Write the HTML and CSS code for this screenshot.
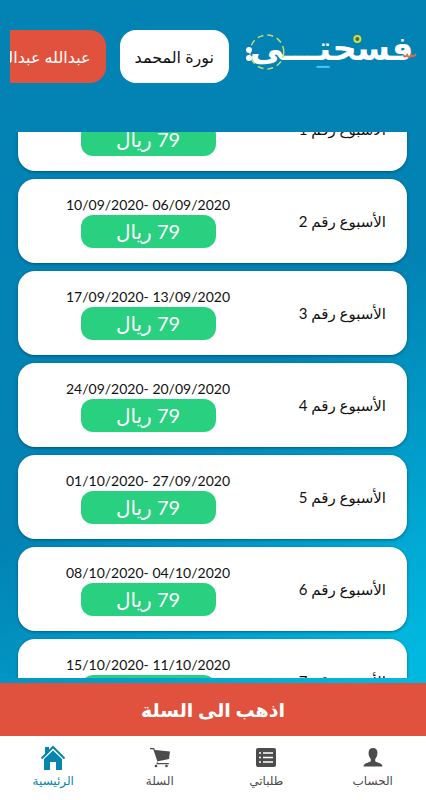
FILE: index.html
```html
<!DOCTYPE html>
<html lang="ar" dir="rtl">
<head>
<meta charset="utf-8">
<meta name="viewport" content="width=device-width, initial-scale=1">
<title>فسحتي</title>
<link rel="stylesheet" href="styles.css">
</head>
<body>
<div class="app">
  <header class="header">
    <svg class="logo" viewBox="0 0 174 44" role="img" aria-label="فسحتي">
      <text class="logo-text" x="87" y="30" text-anchor="middle">فسحتـــى</text>
      <circle class="logo-ring" cx="22" cy="22" r="17"/>
      <circle class="logo-spot" cx="4" cy="20" r="3"/>
      <circle class="logo-spot" cx="4" cy="28" r="3"/>
      <circle class="logo-sun" cx="113" cy="9" r="3"/>
      <path class="logo-dash" d="M72 37h13"/>
      <path class="logo-wave" d="M159 25q2 3 4 0q2 4 4 0q2 3 5 -1"/>
    </svg>
    <nav class="people">
      <button class="person" type="button">نورة المحمد</button>
      <button class="person person-alt" type="button">عبدالله عبدالله</button>
    </nav>
  </header>

  <main class="weeks">
    <article class="card">
      <h2 class="week">الأسبوع رقم 1</h2>
      <div class="offer"><span class="dates" dir="ltr">03/09/2020- 30/08/2020</span><button class="price" type="button">79 ريال</button></div>
    </article>
    <article class="card">
      <h2 class="week">الأسبوع رقم 2</h2>
      <div class="offer"><span class="dates" dir="ltr">10/09/2020- 06/09/2020</span><button class="price" type="button">79 ريال</button></div>
    </article>
    <article class="card">
      <h2 class="week">الأسبوع رقم 3</h2>
      <div class="offer"><span class="dates" dir="ltr">17/09/2020- 13/09/2020</span><button class="price" type="button">79 ريال</button></div>
    </article>
    <article class="card">
      <h2 class="week">الأسبوع رقم 4</h2>
      <div class="offer"><span class="dates" dir="ltr">24/09/2020- 20/09/2020</span><button class="price" type="button">79 ريال</button></div>
    </article>
    <article class="card">
      <h2 class="week">الأسبوع رقم 5</h2>
      <div class="offer"><span class="dates" dir="ltr">01/10/2020- 27/09/2020</span><button class="price" type="button">79 ريال</button></div>
    </article>
    <article class="card">
      <h2 class="week">الأسبوع رقم 6</h2>
      <div class="offer"><span class="dates" dir="ltr">08/10/2020- 04/10/2020</span><button class="price" type="button">79 ريال</button></div>
    </article>
    <article class="card">
      <h2 class="week">الأسبوع رقم 7</h2>
      <div class="offer"><span class="dates" dir="ltr">15/10/2020- 11/10/2020</span><button class="price" type="button">79 ريال</button></div>
    </article>
  </main>

  <button class="go-cart" type="button">اذهب الى السلة</button>

  <nav class="tabs">
    <a class="tab" href="#account">
      <svg class="icon" viewBox="0 0 24 24" aria-hidden="true"><path d="M12 2c-3 0-4.500 2-4.400 5c0 3 1 4.500 2.200 6v2c0 1.500-7.300 1.500-7.300 5.500h19c0-4-7.300-4-7.300-5.500v-2c1.200-1.500 2.200-3 2.200-6c.1-3-1.400-5-4.400-5z"/></svg>
      <span>الحساب</span>
    </a>
    <a class="tab" href="#orders">
      <svg class="icon" viewBox="0 0 24 24" aria-hidden="true"><rect x="2" y="2" width="20" height="19" rx="2"/><path class="icon-lines" d="M9 7h10M9 11.500h10M9 16h10"/><path class="icon-lines" d="M5 7h2M5 11.500h2M5 16h2"/></svg>
      <span>طلباتي</span>
    </a>
    <a class="tab" href="#cart">
      <svg class="icon" viewBox="0 0 24 24" aria-hidden="true"><path d="M2 2h4l1 2l15 1.500l-1 7.500l-12 2.500l.8 1.500h11v1.200h-12.500l1-3l-4-12h-3.300z"/><circle cx="8" cy="20" r="1.300"/><circle cx="18.500" cy="20" r="1.300"/></svg>
      <span>السلة</span>
    </a>
    <a class="tab tab-current" href="#home" aria-current="page">
      <svg class="icon icon-home" viewBox="0 0 26 26" aria-hidden="true"><path d="M13 5.500l9 8.500v11h-6v-8h-6v8h-6v-11z"/><path d="M5 2h4v5l-4 4z"/><path class="icon-roof" d="M1.500 13.500l11.500-11.500l11.500 11.500"/></svg>
      <span>الرئيسية</span>
    </a>
  </nav>
</div>
</body>
</html>
```

FILE: styles.css
```css
* {
  box-sizing: border-box;
}

body {
  margin: 0;
  font-family: Lato, "DejaVu Sans", sans-serif;
  color: #111;
}

button {
  border: 0;
  font: inherit;
  cursor: pointer;
}

.app {
  display: flex;
  flex-direction: column;
  height: 100vh;
  background: linear-gradient(145deg, #0283b4 50%, #00b8e0 86%);
}

.header {
  display: flex;
  flex: none;
  align-items: flex-start;
  gap: 16px;
  height: 132px;
  padding: 30px 8px 0 10px;
}

.logo {
  flex: none;
  width: 173px;
  height: 44px;
  overflow: visible;
}

.logo-text {
  font: bold 34px "DejaVu Sans", sans-serif;
  fill: #fff;
}

.logo-ring {
  fill: none;
  stroke: #c3dc6a;
  stroke-width: 1.5;
  stroke-dasharray: 6 4;
}

.logo-spot {
  fill: #fff;
}

.logo-sun {
  fill: #47702f;
  stroke: #d5dc45;
  stroke-width: 2;
}

.logo-dash {
  fill: none;
  stroke: #4cc4ee;
  stroke-width: 2;
}

.logo-wave {
  fill: none;
  stroke: #d9704c;
  stroke-width: 2;
}

.people {
  display: flex;
  flex: 1;
  gap: 14px;
  min-width: 0;
  overflow: hidden;
}

.person {
  flex: none;
  height: 53px;
  padding: 0 15px;
  border-radius: 16px;
  background: #fff;
  color: #111;
  font-size: 16px;
  white-space: nowrap;
}

.person-alt {
  background: #e0523d;
  color: #fff;
}

.weeks {
  display: flex;
  flex: 1;
  flex-direction: column;
  justify-content: center;
  gap: 8px;
  min-height: 0;
  padding: 0 19px 0 18px;
  overflow: hidden;
}

.card {
  display: flex;
  flex: none;
  align-items: center;
  justify-content: space-between;
  height: 84px;
  padding: 0 21px 0 45px;
  border-radius: 17px;
  background: #fff;
  box-shadow: 0 1px 3px rgba(0, 40, 70, 0.5);
}

.week {
  margin: 0;
  font-size: 15px;
  font-weight: normal;
}

.offer {
  display: flex;
  flex-direction: column;
  align-items: center;
  width: 170px;
}

.dates {
  font-size: 14px;
  line-height: 20px;
  white-space: nowrap;
}

.price {
  width: 135px;
  height: 33px;
  padding: 0;
  border-radius: 12px;
  background: #29d07f;
  color: #fff;
  font-size: 20px;
}

.go-cart {
  flex: none;
  height: 53px;
  margin-top: 5px;
  background: #e0523d;
  color: #fff;
  font-size: 19px;
  font-weight: bold;
}

.tabs {
  display: flex;
  flex: none;
  height: 64px;
  background: #fff;
}

.tab {
  display: flex;
  flex: 1;
  flex-direction: column;
  align-items: center;
  padding-top: 9px;
  color: #4c4c4c;
  font-size: 12px;
  line-height: 20px;
  text-decoration: none;
}

.tab-current {
  color: #0785ad;
}

.icon {
  width: 24px;
  height: 26px;
  fill: currentColor;
}

.icon-home {
  width: 26px;
}

.icon-lines {
  stroke: #fff;
  stroke-width: 1.5;
}

.icon-roof {
  fill: none;
  stroke: currentColor;
  stroke-width: 2;
}
```
